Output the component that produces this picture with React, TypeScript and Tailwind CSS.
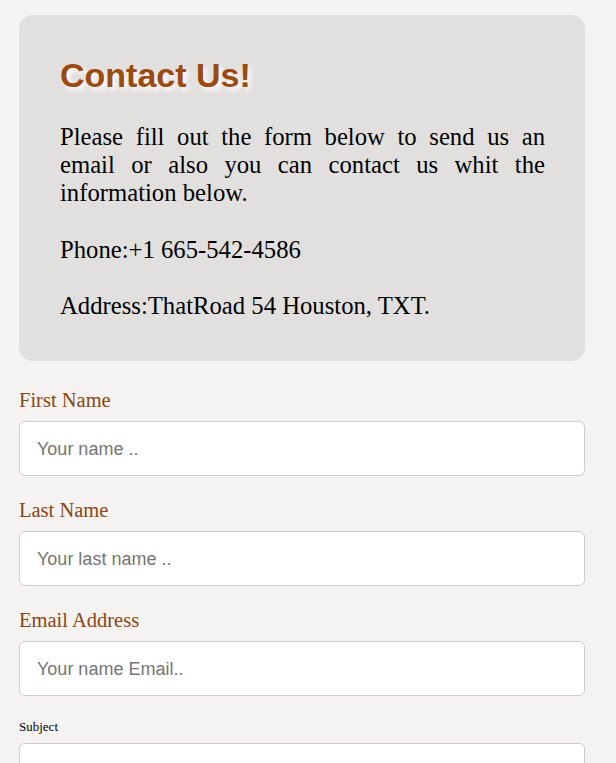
const fields = [
  { label: "First Name", placeholder: "Your name .." },
  { label: "Last Name", placeholder: "Your last name .." },
  { label: "Email Address", placeholder: "Your name Email.." },
];

export default function App() {
  return (
    <div className="min-h-screen bg-[#f4f3f1] pl-[19px] pr-[31px] pt-[15px] pb-10 font-['Liberation_Serif',serif]">
      {/* Info card */}
      <div className="rounded-[14px] bg-[#e2e0de] pl-[41px] pr-[40px] pt-[41px] pb-[41px]">
        <h1 className="font-['Liberation_Sans',Arial,sans-serif] text-[34px] font-bold leading-[39px] text-[#9b4a12] [text-shadow:3px_3px_5px_#ffffff]">
          Contact Us!
        </h1>
        <p className="mt-[28px] text-justify text-[24.7px] leading-[28.2px] text-black">
          Please fill out the form below to send us an email or also you can contact us whit the information below.
          <br />
          <br />
          Phone:+1 665-542-4586
          <br />
          <br />
          Address:ThatRoad 54 Houston, TXT.
        </p>
      </div>

      {/* Form */}
      <form className="mt-[28px]">
        {fields.map((f, i) => (
          <div key={i} className="mb-[23px]">
            <label className="block text-[20.5px] leading-[23px] text-[#8b4513]">{f.label}</label>
            <input
              type="text"
              placeholder={f.placeholder}
              className="mt-[9px] block h-[55px] w-full rounded-[6px] border border-[#cccccc] bg-white px-[17px] pt-[2px] font-['Liberation_Sans',Arial,sans-serif] text-[18px] text-black placeholder:text-[#757575] outline-none"
            />
          </div>
        ))}
        <label className="block text-[13px] leading-[15px] text-black">Subject</label>
        <textarea className="mt-[9px] block h-[150px] w-full rounded-[6px] border border-[#cccccc] bg-white px-[17px] outline-none" />
      </form>
    </div>
  );
}
